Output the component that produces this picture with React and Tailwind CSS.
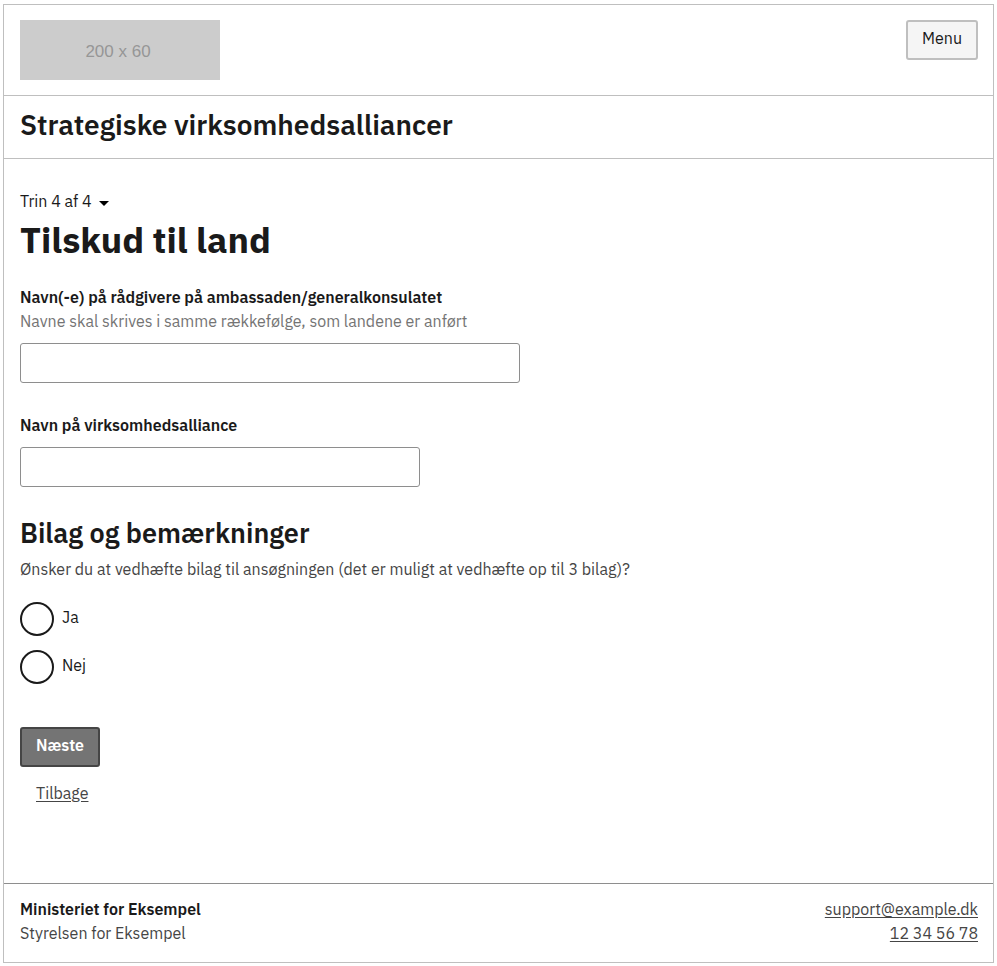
const fieldClass =
  "mt-2.5 h-10 w-full rounded-[3px] border border-[#8e8e8e] bg-white px-3 text-base outline-offset-2";

function Field({ id, label, hint, width }) {
  return (
    <div className="mb-[30px]">
      <label htmlFor={id} className="block font-semibold">
        {label}
      </label>
      {hint && (
        <p id={`${id}-hint`} className="text-[#747474]">
          {hint}
        </p>
      )}
      <div className={width}>
        <input
          id={id}
          type="text"
          aria-describedby={hint ? `${id}-hint` : undefined}
          className={fieldClass}
        />
      </div>
    </div>
  );
}

function Choice({ id, label }) {
  return (
    <div className="flex h-[34px] items-center gap-2">
      <input
        id={id}
        type="radio"
        name="bilag"
        className="h-[34px] w-[34px] shrink-0 appearance-none rounded-full border-2 border-[#1a1a1a] bg-white checked:shadow-[inset_0_0_0_7px_white] checked:bg-[#1a1a1a]"
      />
      <label htmlFor={id} className="pb-1">{label}</label>
    </div>
  );
}

export default function App() {
  return (
    <div className="min-h-screen bg-white px-[3px] pt-1 pb-[3px] font-['IBM_Plex_Sans','Roboto',sans-serif] text-base text-[#1a1a1a]">
      <div className="flex min-h-[calc(100vh-7px)] flex-col border border-[#bfbfbf]">
        <header>
          <div className="flex items-start justify-between border-b border-[#bfbfbf] py-[15px] pr-[15px] pl-4">
            <div className="flex h-[60px] w-[200px] items-center justify-center bg-[#cccccc] pt-1 pr-1 font-['Liberation_Sans',sans-serif] text-[17px] text-[#969696]">
              200 x 60
            </div>
            <button type="button" className="h-10 rounded-[3px] border-2 border-[#bfbfbf] bg-[#f5f5f5] px-3.5 pb-1">
              Menu
            </button>
          </div>
          <div className="border-b border-[#bfbfbf] px-4 pt-[11px] pb-[15px] text-[28px] leading-9 font-semibold">
            Strategiske virksomhedsalliancer
          </div>
        </header>
        <main className="grow px-4 pt-[30px] pb-16">
          <button type="button" className="flex h-6 items-center gap-[7px] text-[#1a1a1a]">
            Trin 4 af 4
            <svg width="10" height="5" viewBox="0 0 10 5" className="mt-1" aria-hidden="true">
              <path d="M0 0h10L5 5z" fill="#000" />
            </svg>
          </button>
          <h1 className="mt-[3px] mb-[21px] text-4xl leading-12 font-bold">Tilskud til land</h1>
          <form>
            <Field
              id="raadgivere"
              label="Navn(-e) på rådgivere på ambassaden/generalkonsulatet"
              hint="Navne skal skrives i samme rækkefølge, som landene er anført"
              width="max-w-[500px]"
            />
            <Field id="alliance" label="Navn på virksomhedsalliance" width="max-w-[400px]" />
            <h2 className="mb-2 text-[27px] leading-8 font-semibold">Bilag og bemærkninger</h2>
            <fieldset>
              <legend className="mb-[21px] text-[#454545]">
                Ønsker du at vedhæfte bilag til ansøgningen (det er muligt at vedhæfte op til 3 bilag)?
              </legend>
              <div className="flex flex-col gap-3.5">
                <Choice id="ja" label="Ja" />
                <Choice id="nej" label="Nej" />
              </div>
            </fieldset>
            <button type="button" className="mt-[43px] h-10 rounded-[3px] border-2 border-[#454545] bg-[#747474] px-3.5 pb-1 font-semibold text-white">
              Næste
            </button>
            <div className="mt-3.5 px-4">
              <a href="#tilbage" className="text-[#454545] underline underline-offset-2">Tilbage</a>
            </div>
          </form>
        </main>
        <footer className="flex items-start justify-between border-t border-[#8e8e8e] pt-[13px] pr-[15px] pb-[17px] pl-4">
          <div>
            <p className="font-semibold">Ministeriet for Eksempel</p>
            <p className="text-[#454545]">Styrelsen for Eksempel</p>
          </div>
          <div className="flex flex-col items-end text-[#454545]">
            <a href="mailto:support@example.dk" className="underline underline-offset-2">support@example.dk</a>
            <a href="tel:12345678" className="underline underline-offset-2">12 34 56 78</a>
          </div>
        </footer>
      </div>
    </div>
  );
}
